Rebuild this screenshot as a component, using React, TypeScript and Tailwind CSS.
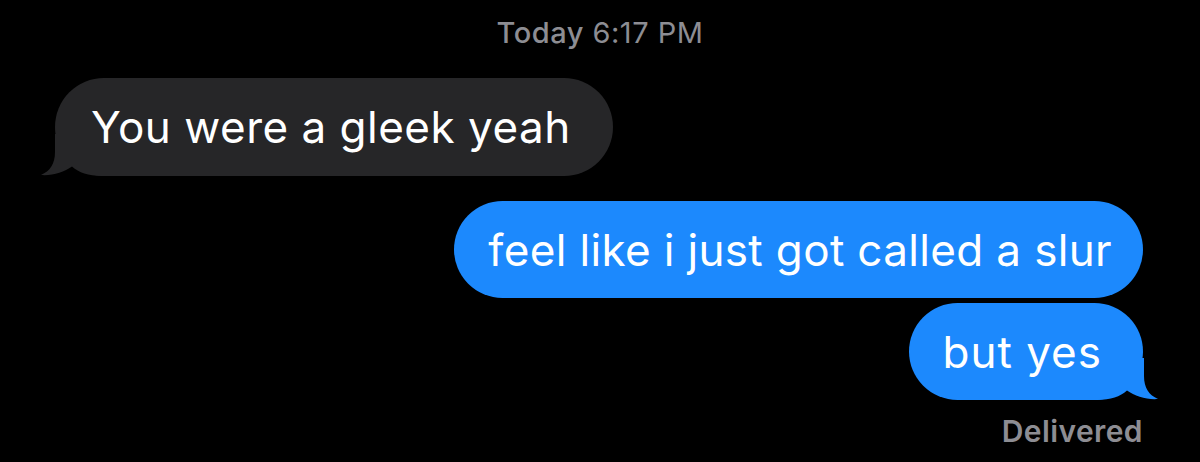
import React from "react";

function Tail({ color, side }: { color: string; side: "left" | "right" }) {
  return (
    <svg
      width="74"
      height="42"
      viewBox="0 0 74 42"
      className={
        side === "left"
          ? "absolute bottom-0 -left-[14px]"
          : "absolute bottom-0 -right-[15px] -scale-x-100"
      }
    >
      <path
        d="M14 0 L14 18 C14 30 9 37 0 41 C11 42 23 38 31 32.5 C38 38.5 47 42 61 42 L74 42 L74 0 Z"
        fill={color}
      />
    </svg>
  );
}

export default function App() {
  const gray = "#262628";
  const blue = "#1c89fd";

  return (
    <div className="w-[1200px] h-[462px] overflow-hidden bg-black font-['Inter','Noto_Sans',sans-serif]">
      {/* timestamp */}
      <div className="pt-[16px] text-center text-[29px] leading-[34px] tracking-[0.5px] text-[#8d8d93]">
        <span className="font-medium">Today</span> <span>6:17 PM</span>
      </div>

      {/* incoming */}
      <div className="mt-[28px] flex pl-[55px]">
        <div className="relative flex h-[98px] items-center rounded-[49px] bg-[#262628] pl-[36px] pr-[42px]">
          <Tail color={gray} side="left" />
          <span className="relative text-[44px] leading-none tracking-[0.5px] text-white">
            You were a gleek yeah
          </span>
        </div>
      </div>

      {/* outgoing */}
      <div className="mt-[25px] flex flex-col items-end gap-[5px] pr-[57px]">
        <div className="flex h-[97px] items-center rounded-[49px] bg-[#1c89fd] pl-[34px] pr-[31px]">
          <span className="text-[44px] leading-none tracking-[0.35px] text-white">
            feel like i just got called a slur
          </span>
        </div>
        <div className="relative flex h-[97px] items-center rounded-[49px] bg-[#1c89fd] pl-[34px] pr-[41px]">
          <Tail color={blue} side="right" />
          <span className="relative text-[44px] leading-none tracking-[1px] text-white">
            but yes
          </span>
        </div>
      </div>

      <div className="mt-[13px] pr-[57px] text-right text-[30px] leading-[36px] font-semibold tracking-[0.4px] text-[#8d8d93]">
        Delivered
      </div>
    </div>
  );
}
